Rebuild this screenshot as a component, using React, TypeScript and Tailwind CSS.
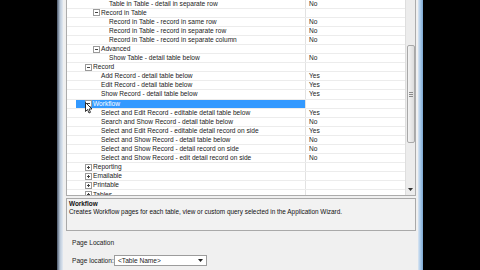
import React from "react";

type Row = {
  label: string;
  level: 0 | 1 | 2;
  kind: "leaf" | "open" | "closed";
  value?: string;
  selected?: boolean;
};

const rows: Row[] = [
  { label: "Table in Table - detail in separate row", level: 2, kind: "leaf", value: "No" },
  { label: "Record in Table", level: 1, kind: "open" },
  { label: "Record in Table - record in same row", level: 2, kind: "leaf", value: "No" },
  { label: "Record in Table - record in separate row", level: 2, kind: "leaf", value: "No" },
  { label: "Record in Table - record in separate column", level: 2, kind: "leaf", value: "No" },
  { label: "Advanced", level: 1, kind: "open" },
  { label: "Show Table - detail table below", level: 2, kind: "leaf", value: "No" },
  { label: "Record", level: 0, kind: "open" },
  { label: "Add Record - detail table below", level: 1, kind: "leaf", value: "Yes" },
  { label: "Edit Record - detail table below", level: 1, kind: "leaf", value: "Yes" },
  { label: "Show Record - detail table below", level: 1, kind: "leaf", value: "Yes" },
  { label: "Workflow", level: 0, kind: "open", selected: true },
  { label: "Select and Edit Record - editable detail table below", level: 1, kind: "leaf", value: "Yes" },
  { label: "Search and Show Record - detail table below", level: 1, kind: "leaf", value: "No" },
  { label: "Select and Edit Record - editable detail record on side", level: 1, kind: "leaf", value: "Yes" },
  { label: "Select and Show Record - detail table below", level: 1, kind: "leaf", value: "No" },
  { label: "Select and Show Record - detail record on side", level: 1, kind: "leaf", value: "No" },
  { label: "Select and Show Record - edit detail record on side", level: 1, kind: "leaf", value: "No" },
  { label: "Reporting", level: 0, kind: "closed" },
  { label: "Emailable", level: 0, kind: "closed" },
  { label: "Printable", level: 0, kind: "closed" },
  { label: "Tables", level: 0, kind: "closed" },
];

const groupPad: Record<number, string> = { 0: "pl-[9px]", 1: "pl-[17px]", 2: "pl-[25px]" };
const leafPad: Record<number, string> = { 0: "pl-[17px]", 1: "pl-[25px]", 2: "pl-[33px]" };

function Expander({ open }: { open: boolean }) {
  return (
    <svg width="7" height="7" viewBox="0 0 7 7" className="mr-[1px] shrink-0">
      <rect x="0.5" y="0.5" width="6" height="6" fill="#ffffff" stroke="#9a9a9a" strokeWidth="1" />
      <line x1="2" y1="3.5" x2="5" y2="3.5" stroke="#444" strokeWidth="1" />
      {!open && <line x1="3.5" y1="2" x2="3.5" y2="5" stroke="#444" strokeWidth="1" />}
    </svg>
  );
}

function TreeRow({ row }: { row: Row }) {
  const pad = row.kind === "leaf" ? leafPad[row.level] : groupPad[row.level];
  return (
    <div className="flex h-[9.1px] shrink-0 border-b border-[#ececec]">
      <div className="w-[9px] shrink-0" />
      <div
        className={`w-[230px] shrink-0 flex items-center whitespace-nowrap overflow-hidden border-r border-[#e2e2e2] ${pad} ${
          row.selected ? "bg-[#3399ff] text-white" : "text-[#222]"
        }`}
      >
        {row.kind !== "leaf" && <Expander open={row.kind === "open"} />}
        <span>{row.label}</span>
      </div>
      <div className="flex-1 flex items-center pl-[3px] text-[#222]">{row.value}</div>
    </div>
  );
}

export default function App() {
  return (
    <div
      className="relative w-[480px] h-[270px] bg-black flex overflow-hidden text-[6.6px] leading-[8px]"
      style={{ fontFamily: '"Liberation Sans", Arial, sans-serif' }}
    >
      <div className="w-[57px] shrink-0" />
      <div className="w-[6px] shrink-0 bg-[linear-gradient(to_right,#4a5668,#b9c8d9,#e3eaf2)]" />
      <div className="w-[355px] shrink-0 bg-[#f0f0f0] flex flex-col">
        {/* tree grid */}
        <div className="ml-[3px] w-[350px] h-[196px] shrink-0 flex bg-white border-l border-r border-b border-[#acacac] overflow-hidden">
          <div className="flex-1 flex flex-col -mt-[0.5px] overflow-hidden">
            {rows.map((r, i) => (
              <TreeRow key={i} row={r} />
            ))}
          </div>
          <div className="w-[10px] shrink-0 bg-[#ececec] border-l border-[#dedede] flex flex-col items-center">
            <div className="mt-[45px] w-[8px] h-[98px] rounded-[2px] border border-[#a8a8a8] bg-[linear-gradient(to_right,#f4f4f4,#dcdcdc)] flex flex-col items-center justify-center gap-[1px]">
              <div className="w-[4px] h-px bg-[#8a8a8a]" />
              <div className="w-[4px] h-px bg-[#8a8a8a]" />
              <div className="w-[4px] h-px bg-[#8a8a8a]" />
            </div>
            <div className="flex-1" />
            <div className="h-[12px] flex items-center justify-center">
              <svg width="5" height="3" viewBox="0 0 5 3">
                <polygon points="0,0 5,0 2.5,3" fill="#333" />
              </svg>
            </div>
          </div>
        </div>

        {/* description box */}
        <div className="mt-[2px] ml-[3px] w-[350px] h-[33px] shrink-0 border border-[#a9a9a9] bg-[#f2f2f2] px-[2px] pt-[1px] text-[#111] text-[6.4px]">
          <div className="font-bold">Workflow</div>
          <div>Creates Workflow pages for each table, view or custom query selected in the Application Wizard.</div>
        </div>

        <div className="mt-[8px] ml-[9px] text-[#222]">Page Location</div>

        <div className="mt-[8px] ml-[9px] flex items-center text-[#222]">
          <div className="w-[42px] shrink-0">Page location:</div>
          <div className="w-[93px] h-[11px] border border-[#9c9c9c] bg-white flex items-center">
            <span className="pl-[3px] flex-1">&lt;Table Name&gt;</span>
            <svg width="5" height="3" viewBox="0 0 5 3" className="mr-[3px]">
              <polygon points="0,0 5,0 2.5,3" fill="#222" />
            </svg>
          </div>
        </div>
      </div>
      <div className="w-[5px] shrink-0 bg-[linear-gradient(to_right,#dbe6f2,#a6c8e8,#7aa6d0)]" />
      <div className="flex-1" />

      {/* mouse cursor */}
      <svg
        width="8"
        height="12"
        viewBox="0 0 8 12"
        className="absolute left-[85px] top-[102px]"
      >
        <polygon
          points="0.5,0.5 0.5,9.5 2.5,7.5 4,11 5.5,10.3 4,7 7,7"
          fill="#ffffff"
          stroke="#000"
          strokeWidth="0.8"
          strokeLinejoin="round"
        />
      </svg>
    </div>
  );
}
